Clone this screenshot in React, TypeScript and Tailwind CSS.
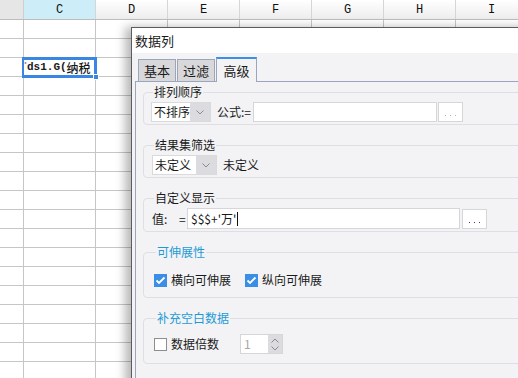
import React from 'react';

const cols = ['C', 'D', 'E', 'F', 'G', 'H', 'I'];
const rows = Array.from({ length: 20 }, (_, i) => i);

const Chevron = ({ up = false }: { up?: boolean }) => (
  <svg width="8" height="5" viewBox="0 0 8 5" className={up ? 'rotate-180' : ''}>
    <polyline points="0.5,0.5 4,4 7.5,0.5" fill="none" stroke="#8a8a8e" strokeWidth="1" />
  </svg>
);

const Select = ({ value, width }: { value: string; width: string }) => (
  <div className={`flex h-[20px] border border-[#dadadd] bg-white ${width}`}>
    <div className="flex flex-1 items-center pl-[2px] text-[12px] text-[#1a1a1a]">{value}</div>
    <div className="flex w-[20px] items-center justify-center bg-[#dcdce0]">
      <Chevron />
    </div>
  </div>
);

const Dots = ({ dark = false }: { dark?: boolean }) => (
  <div className="flex h-[20px] w-[25px] items-end justify-center gap-[4px] border border-[#d6d6d9] bg-white pb-[5px]">
    <span className={`h-[1px] w-[1px] ${dark ? 'bg-[#5b2d6b]' : 'bg-[#b4b4b4]'}`} />
    <span className={`h-[1px] w-[1px] ${dark ? 'bg-[#5b2d6b]' : 'bg-[#b4b4b4]'}`} />
    <span className={`h-[1px] w-[1px] ${dark ? 'bg-[#5b2d6b]' : 'bg-[#b4b4b4]'}`} />
  </div>
);

const Checked = () => (
  <div className="flex h-[13px] w-[13px] items-center justify-center bg-[#3a8ee6]">
    <svg width="11" height="9" viewBox="0 0 11 9">
      <polyline points="1.5,4.5 4,7 9.5,1.5" fill="none" stroke="white" strokeWidth="1.8" />
    </svg>
  </div>
);

const Group = ({
  title,
  blue = false,
  className,
  children,
}: {
  title: string;
  blue?: boolean;
  className: string;
  children: React.ReactNode;
}) => (
  <fieldset className={`w-[390px] rounded-[4px] border border-[#dfdfe3] ${className}`}>
    <legend
      className={`ml-[2px] px-[1px] text-[12px] leading-[16px] ${blue ? 'text-[#1e9ad6]' : 'text-[#1a1a1a]'}`}
    >
      {title}
    </legend>
    {children}
  </fieldset>
);

export default function App() {
  return (
    <div
      className="relative h-[378px] w-[518px] overflow-hidden bg-white"
      style={{ fontFamily: '"Noto Sans CJK SC", "Noto Sans", sans-serif' }}
    >
      {/* Sheet header */}
      <div className="flex h-[20px] border-b border-[#bdbdbd]">
        <div className="w-[24px] shrink-0 border-r border-[#cfcfcf] bg-[#e6e6e6]" />
        {cols.map((c) => (
          <div
            key={c}
            className={`flex w-[72px] shrink-0 items-center justify-center border-r border-[#d6d6d6] text-[12px] text-[#111] ${
              c === 'C' ? 'bg-[#cdeef9]' : 'bg-gradient-to-b from-white to-[#ededed]'
            }`}
            style={{ fontFamily: '"Liberation Mono", monospace' }}
          >
            {c}
          </div>
        ))}
      </div>

      {/* Sheet rows */}
      {rows.map((r) => (
        <div key={r} className="flex h-[19px] border-b border-[#c6c6c6]">
          <div className="w-[24px] shrink-0 border-r border-[#c6c6c6]" />
          {cols.map((c) =>
            r === 2 && c === 'C' ? (
              // selected cell, drawn in flow: blue box with white inside
              <div
                key={c}
                className="relative -ml-[2px] -mt-[1px] h-[21px] w-[75px] shrink-0 bg-[#3a86e4] py-[3px] pl-[2px] pr-[3px]"
              >
                <div className="flex h-full items-center bg-white text-[#1a1a1a]">
                  <span className="mb-[6px] w-[3px] text-[6px] leading-none text-[#555]">*</span>
                  <span className="text-[11px] font-bold" style={{ fontFamily: '"Liberation Mono", monospace' }}>
                    ds1.G(
                  </span>
                  <span className="text-[12px] font-medium">纳税</span>
                </div>
                <div className="absolute -bottom-[2px] -right-[2px] h-[6px] w-[6px] border border-white bg-[#3a86e4]" />
              </div>
            ) : (
              <div key={c} className="w-[72px] shrink-0 border-r border-[#c6c6c6]" />
            ),
          )}
        </div>
      ))}

      {/* Dialog */}
      <div className="absolute left-[131px] top-[27px] z-20 h-[360px] w-[420px] border-l border-t border-[#5c5c5c] bg-[#f3f3f5] shadow-[-6px_0_9px_rgba(0,0,0,0.28)]">
        <div className="flex h-[25px] items-center bg-white pl-[3px] text-[13px] text-[#1a1a1a]">数据列</div>

        <div className="pl-[3px]">
          {/* Tabs */}
          <div className="flex h-[28px] items-end gap-[1px] pl-[3px]">
            <div className="flex h-[22px] w-[38px] items-center justify-center border border-b-0 border-[#9aa6bb] bg-[#d8d8db] text-[13px] text-[#1a1a1a]">
              基本
            </div>
            <div className="flex h-[22px] w-[38px] items-center justify-center border border-b-0 border-[#9aa6bb] bg-[#d8d8db] text-[13px] text-[#1a1a1a]">
              过滤
            </div>
            <div className="relative z-10 -mb-px flex h-[25px] w-[41px] items-center justify-center border-x border-t-2 border-[#9aa6bb] border-t-[#3d8fe6] bg-[#f3f3f5] text-[13px] text-[#1a1a1a]">
              高级
            </div>
          </div>

          {/* Panel */}
          <div className="flex h-[300px] flex-col border border-[#9aa6bb] bg-[#f3f3f5] pl-[7px] pt-[2px]">
            <Group title="排列顺序" className="pb-[2px] pl-[7px] pt-[2px]">
              <div className="flex items-center">
                <Select value="不排序" width="w-[60px]" />
                <span className="ml-[6px] w-[36px] text-[12px] text-[#1a1a1a]">公式:=</span>
                <div className="h-[20px] w-[184px] border border-[#d6d6d9] bg-white" />
                <div className="ml-[1px]">
                  <Dots />
                </div>
              </div>
            </Group>

            <Group title="结果集筛选" className="mt-[12px] pb-[2px] pl-[8px] pt-[2px]">
              <div className="flex items-center">
                <Select value="未定义" width="w-[65px]" />
                <span className="ml-[6px] text-[12px] text-[#1a1a1a]">未定义</span>
              </div>
            </Group>

            <Group title="自定义显示" className="mt-[12px] pb-[2px] pl-[8px] pt-[2px]">
              <div className="flex items-center">
                <span className="w-[27px] text-[12px] text-[#1a1a1a]">值:</span>
                <span className="w-[8px] text-[12px] text-[#1a1a1a]">=</span>
                <div className="flex h-[21px] w-[273px] items-center border border-[#d6d6d9] bg-white pl-[3px] text-[12px] text-[#1a1a1a]">
                  $$$+'万'
                  <span className="ml-[1px] h-[14px] w-[1px] bg-[#111]" />
                </div>
                <div className="ml-[2px]">
                  <Dots dark />
                </div>
              </div>
            </Group>

            <Group title="可伸展性" blue className="mt-[12px] pb-[7px] pl-[10px] pt-[10px]">
              <div className="flex h-[20px] items-center text-[12px] text-[#1a1a1a]">
                <Checked />
                <span className="ml-[4px]">横向可伸展</span>
                <span className="ml-[14px]">
                  <Checked />
                </span>
                <span className="ml-[4px]">纵向可伸展</span>
              </div>
            </Group>

            <Group title="补充空白数据" blue className="mt-[12px] pb-[9px] pl-[10px] pt-[8px]">
              <div className="flex h-[20px] items-center text-[12px] text-[#1a1a1a]">
                <div className="h-[13px] w-[13px] border border-[#8e8e8e] bg-white" />
                <span className="ml-[4px]">数据倍数</span>
                <div className="ml-[21px] flex h-[20px] w-[43px] border border-[#d6d6d9] bg-white">
                  <div className="flex flex-1 items-center pl-[3px] text-[#a8a8a8]">1</div>
                  <div className="flex w-[14px] flex-col items-center justify-center gap-[3px] bg-[#dcdce0]">
                    <Chevron up />
                    <Chevron />
                  </div>
                </div>
              </div>
            </Group>
          </div>
        </div>
      </div>
    </div>
  );
}
